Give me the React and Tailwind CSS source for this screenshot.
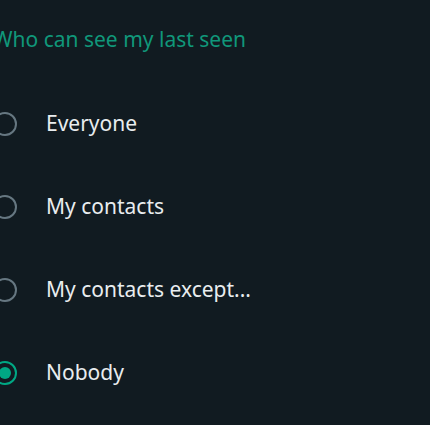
import React, { useState } from "react";

const options = ["Everyone", "My contacts", "My contacts except...", "Nobody"];

function Radio({ checked }) {
  return (
    <span
      className={
        "flex h-[24px] w-[24px] flex-shrink-0 items-center justify-center rounded-full border-2 " +
        (checked ? "border-[#00a884]" : "border-[#667781]")
      }
    >
      {checked && <span className="h-[12px] w-[12px] rounded-full bg-[#00a884]" />}
    </span>
  );
}

export default function App() {
  const [selected, setSelected] = useState("Nobody");

  return (
    <div
      className="h-[425px] w-full overflow-hidden bg-[#111b21]"
      style={{ fontFamily: '"Noto Sans", "Open Sans", sans-serif' }}
    >
      <div className="-ml-[7px]">
        <div className="flex h-[82px] items-center">
          <h2 className="text-[21px] text-[#10977a] pb-[2px]">Who can see my last seen</h2>
        </div>
        {options.map(opt => (
          <button
            key={opt}
            onClick={() => setSelected(opt)}
            className="flex h-[83px] w-full items-center gap-[29px] text-left"
          >
            <Radio checked={selected === opt} />
            <span className="text-[21px] text-[#e9edef]">{opt}</span>
          </button>
        ))}
      </div>
    </div>
  );
}
